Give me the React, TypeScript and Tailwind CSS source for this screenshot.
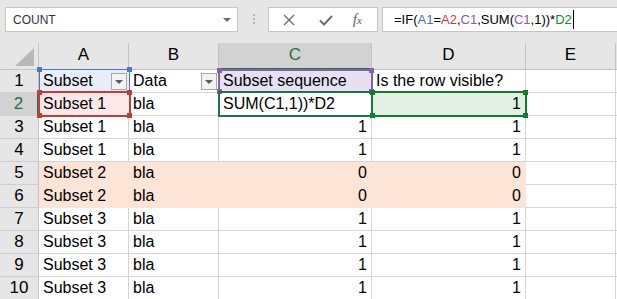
import type { FC, ReactNode } from "react";

type Row = {
  n: number;
  a: string;
  b: string;
  c: string;
  d: string;
  fill?: boolean;
};

const rows: Row[] = [
  { n: 1, a: "Subset", b: "Data", c: "Subset sequence", d: "Is the row visible?" },
  { n: 2, a: "Subset 1", b: "bla", c: "SUM(C1,1))*D2", d: "1" },
  { n: 3, a: "Subset 1", b: "bla", c: "1", d: "1" },
  { n: 4, a: "Subset 1", b: "bla", c: "1", d: "1" },
  { n: 5, a: "Subset 2", b: "bla", c: "0", d: "0", fill: true },
  { n: 6, a: "Subset 2", b: "bla", c: "0", d: "0", fill: true },
  { n: 7, a: "Subset 3", b: "bla", c: "1", d: "1" },
  { n: 8, a: "Subset 3", b: "bla", c: "1", d: "1" },
  { n: 9, a: "Subset 3", b: "bla", c: "1", d: "1" },
  { n: 10, a: "Subset 3", b: "bla", c: "1", d: "1" },
];

const FilterButton: FC = () => (
  <span className="absolute right-[1px] top-[3px] flex h-[17px] w-[16px] items-center justify-center border border-[#a8a8a8] bg-[#f2f2f2]">
    <span className="h-0 w-0 border-x-[4px] border-t-[4px] border-x-transparent border-t-[#5a5a5a]" />
  </span>
);

const Cell: FC<{ w: string; cls?: string; right?: boolean; children?: ReactNode }> = ({
  w,
  cls = "bg-white border-[#d4d4d4]",
  right,
  children,
}) => (
  <div
    className={`relative h-[23px] shrink-0 border-r border-b px-[4px] text-[16px] leading-[22px] whitespace-nowrap overflow-hidden text-black ${w} ${cls} ${
      right ? "text-right" : ""
    }`}
  >
    {children}
  </div>
);

// range-finder box with small corner handles
const RefBox: FC<{ pos: string; color: string; border: string }> = ({ pos, color, border }) => (
  <div className={`pointer-events-none absolute ${pos} ${border}`}>
    <span className={`absolute -left-[3px] -top-[3px] h-[5px] w-[5px] ${color}`} />
    <span className={`absolute -right-[3px] -top-[3px] h-[5px] w-[5px] ${color}`} />
    <span className={`absolute -left-[3px] -bottom-[3px] h-[5px] w-[5px] ${color}`} />
    <span className={`absolute -right-[3px] -bottom-[3px] h-[5px] w-[5px] ${color}`} />
  </div>
);

export default function App() {
  const peach = "bg-[#fce4d6] border-[#fce4d6]";

  return (
    <div className="h-[299px] w-[617px] overflow-hidden bg-white font-['Liberation_Sans',Arial,sans-serif]">
      {/* formula bar */}
      <div className="flex h-[43px] items-start bg-[#e6e6e6] pt-[7px]">
        <div className="ml-[5px] flex h-[25px] w-[233px] items-center justify-between border border-[#c6c6c6] bg-white pl-[7px] pr-[6px]">
          <span className="text-[12px] text-[#333]">COUNT</span>
          <span className="h-0 w-0 border-x-[4px] border-t-[4px] border-x-transparent border-t-[#6b6b6b]" />
        </div>
        <div className="ml-[15px] mt-[7px] flex flex-col gap-[2px]">
          <span className="h-[2px] w-[2px] bg-[#b5b5b5]" />
          <span className="h-[2px] w-[2px] bg-[#b5b5b5]" />
          <span className="h-[2px] w-[2px] bg-[#b5b5b5]" />
        </div>
        <div className="ml-[13px] flex h-[25px] w-[110px] items-center border border-[#c6c6c6] bg-white">
          <svg width="14" height="14" viewBox="0 0 14 14" className="ml-[13px]">
            <path d="M2 2 L12 12 M12 2 L2 12" stroke="#6e6e6e" strokeWidth="1.4" fill="none" />
          </svg>
          <svg width="16" height="14" viewBox="0 0 16 14" className="ml-[22px]">
            <path d="M2 7.5 L6 11.5 L14 3" stroke="#6e6e6e" strokeWidth="2" fill="none" />
          </svg>
          <span className="ml-[19px] font-['Liberation_Serif',serif] text-[14px] italic text-[#555]">
            f<span className="text-[11px]">x</span>
          </span>
        </div>
        <div className="ml-[4px] flex h-[25px] flex-1 items-center border border-r-0 border-[#c6c6c6] bg-white pl-[11px] text-[13px] text-black">
          <span>=IF(</span>
          <span className="text-[#3b6fd0]">A1</span>
          <span>=</span>
          <span className="text-[#d23b3b]">A2</span>
          <span>,</span>
          <span className="text-[#8a55c4]">C1</span>
          <span>,SUM(</span>
          <span className="text-[#8a55c4]">C1</span>
          <span>,1))*</span>
          <span className="text-[#138a36]">D2</span>
          <span className="ml-[1px] h-[19px] w-[1px] bg-black" />
        </div>
      </div>

      {/* sheet */}
      <div className="relative">
        {/* column headers */}
        <div className="flex h-[27px] text-[17px] text-black">
          <div className="relative w-[39px] shrink-0 border-r border-b border-[#c4c4c4] bg-[#e6e6e6]">
            <svg className="absolute bottom-[3px] right-[4px]" width="19" height="18" viewBox="0 0 19 18">
              <polygon points="19,0 19,18 0,18" fill="#b8b8b8" />
            </svg>
          </div>
          <div className="flex w-[90px] shrink-0 items-end justify-center border-r border-b border-[#c4c4c4] bg-[#e6e6e6] pb-[2px]">A</div>
          <div className="flex w-[90px] shrink-0 items-end justify-center border-r border-b border-[#c4c4c4] bg-[#e6e6e6] pb-[2px]">B</div>
          <div className="flex w-[153px] shrink-0 items-end justify-center border-r border-b-2 border-r-[#c4c4c4] border-b-[#217346] bg-[#d2d2d2] pb-[1px] text-[#217346]">C</div>
          <div className="flex w-[154px] shrink-0 items-end justify-center border-r border-b border-[#c4c4c4] bg-[#e6e6e6] pb-[2px]">D</div>
          <div className="flex w-[90px] shrink-0 items-end justify-center border-r border-b border-[#c4c4c4] bg-[#e6e6e6] pb-[2px]">E</div>
          <div className="flex-1 border-b border-[#c4c4c4] bg-[#e6e6e6]" />
        </div>

        {rows.map((r) => {
          const sel = r.n === 2;
          return (
            <div key={r.n} className="flex">
              <div
                className={`flex h-[23px] w-[39px] shrink-0 items-center justify-center border-b border-[#cfcfcf] text-[17px] ${
                  sel
                    ? "border-r-2 border-r-[#217346] bg-[#d2d2d2] text-[#217346]"
                    : "border-r border-r-[#c4c4c4] bg-[#e6e6e6] text-black"
                }`}
              >
                {r.n}
              </div>
              <Cell
                w="w-[90px]"
                cls={
                  r.n === 1
                    ? "bg-[#e8eef8] border-[#e8eef8]"
                    : r.n === 2
                    ? "bg-[#fbe9e9] border-[#fbe9e9]"
                    : r.fill
                    ? peach
                    : undefined
                }
              >
                {r.a}
                {r.n === 1 && <FilterButton />}
              </Cell>
              <Cell w="w-[90px]" cls={r.fill ? peach : undefined}>
                {r.b}
                {r.n === 1 && <FilterButton />}
              </Cell>
              <Cell
                w="w-[153px]"
                right={r.n > 2}
                cls={r.n === 1 ? "bg-[#e6e0f2] border-[#e6e0f2]" : r.fill ? peach : undefined}
              >
                {r.c}
              </Cell>
              <Cell w="w-[154px]" right={r.n > 1} cls={r.n === 2 ? "bg-[#e2f0e3] border-[#e2f0e3]" : r.fill ? peach : undefined}>
                {r.d}
              </Cell>
              <Cell w="w-[90px]" />
              <div className="h-[23px] flex-1 border-b border-[#d4d4d4] bg-white" />
            </div>
          );
        })}

        {/* reference highlights */}
        <RefBox pos="left-[39px] top-[26px] h-[24px] w-[91px]" color="bg-[#4a78c8]" border="border border-[#4a78c8]" />
        <RefBox pos="left-[218px] top-[26px] h-[24px] w-[155px]" color="bg-[#8064a8]" border="border-2 border-[#8064a8]" />
        <RefBox pos="left-[38px] top-[48px] h-[26px] w-[93px]" color="bg-[#c23b3b]" border="border-2 border-[#c23b3b]" />
        <div className="pointer-events-none absolute left-[218px] top-[48px] h-[26px] w-[155px] border-2 border-[#217346]" />
        <RefBox pos="left-[371px] top-[48px] h-[26px] w-[156px]" color="bg-[#107c2f]" border="border-2 border-[#107c2f]" />
      </div>
    </div>
  );
}
